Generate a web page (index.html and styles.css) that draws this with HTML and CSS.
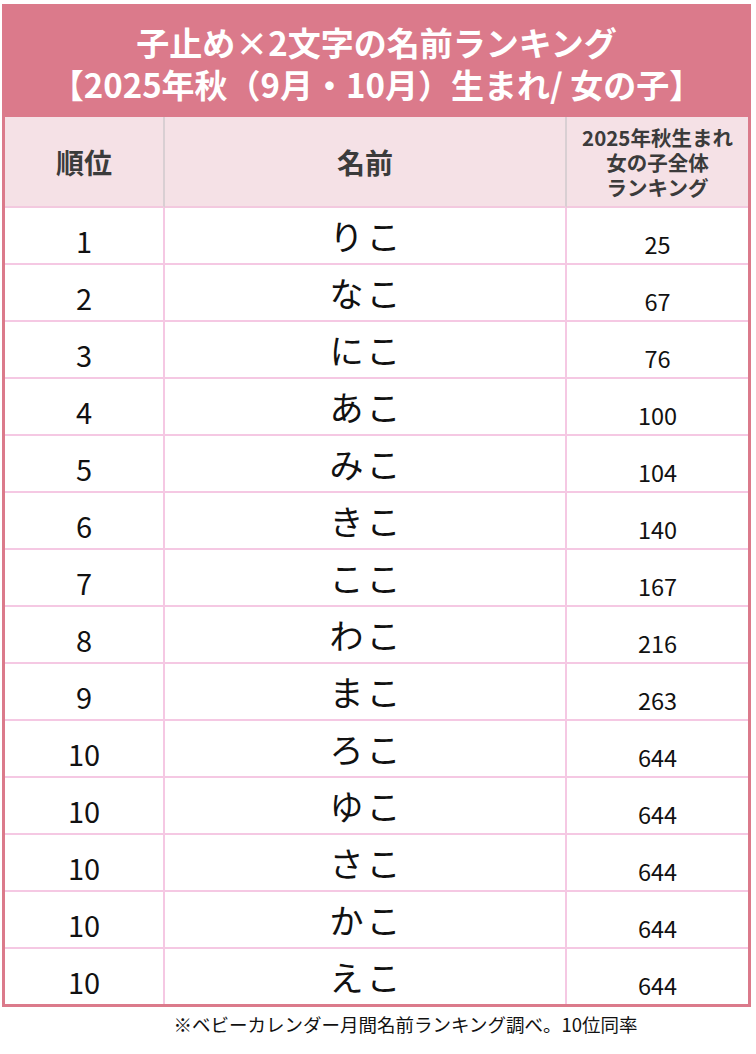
FILE: index.html
```html
<!DOCTYPE html>
<html lang="ja">
<head>
<meta charset="utf-8">
<link rel="stylesheet" href="styles.css">
</head>
<body>
<div class="sheet">
  <div class="title">
    <div class="tline">子止め×2文字の名前ランキング</div>
    <div class="tline">【2025年秋（9月・10月）生まれ/ 女の子】</div>
  </div>
  <div class="grid">
    <div class="hd c1">順位</div>
    <div class="hd c2">名前</div>
    <div class="hd c3 small">2025年秋生まれ<br>女の子全体<br>ランキング</div>

    <div class="rank c1">1</div><div class="name c2">りこ</div><div class="num c3">25</div>
    <div class="rank c1">2</div><div class="name c2">なこ</div><div class="num c3">67</div>
    <div class="rank c1">3</div><div class="name c2">にこ</div><div class="num c3">76</div>
    <div class="rank c1">4</div><div class="name c2">あこ</div><div class="num c3">100</div>
    <div class="rank c1">5</div><div class="name c2">みこ</div><div class="num c3">104</div>
    <div class="rank c1">6</div><div class="name c2">きこ</div><div class="num c3">140</div>
    <div class="rank c1">7</div><div class="name c2">ここ</div><div class="num c3">167</div>
    <div class="rank c1">8</div><div class="name c2">わこ</div><div class="num c3">216</div>
    <div class="rank c1">9</div><div class="name c2">まこ</div><div class="num c3">263</div>
    <div class="rank c1">10</div><div class="name c2">ろこ</div><div class="num c3">644</div>
    <div class="rank c1">10</div><div class="name c2">ゆこ</div><div class="num c3">644</div>
    <div class="rank c1">10</div><div class="name c2">さこ</div><div class="num c3">644</div>
    <div class="rank c1">10</div><div class="name c2">かこ</div><div class="num c3">644</div>
    <div class="rank c1 last">10</div><div class="name c2 last">えこ</div><div class="num c3 last">644</div>
  </div>
  <div class="note">※ベビーカレンダー月間名前ランキング調べ。10位同率</div>
</div>
</body>
</html>
```
FILE: styles.css
```css
html, body {
  margin: 0;
  padding: 0;
  background: #ffffff;
}
body {
  font-family: "Noto Sans CJK JP", "Noto Sans", sans-serif;
  color: #111111;
}
* {
  box-sizing: border-box;
}
.sheet {
  padding-top: 4px;
  padding-left: 2px;
  width: 751px;
}
.title {
  background: #db7a8b;
  color: #ffffff;
  font-weight: 700;
  font-size: 33px;
  text-align: center;
  padding: 17px 0 12px;
  height: 113px;
}
.tline {
  height: 42px;
  line-height: 42px;
  white-space: nowrap;
}
.grid {
  display: grid;
  grid-template-columns: 160px 402px 181px;
  border-left: 3px solid #db7a8b;
  border-right: 3px solid #db7a8b;
  border-bottom: 3px solid #db7a8b;
}
.grid > div {
  display: flex;
  justify-content: center;
  align-items: center;
  text-align: center;
  height: 57px;
  border-bottom: 2px solid #f5c8e3;
}
.grid > .c1, .grid > .c2 {
  border-right: 2px solid #f5c8e3;
}
.grid > .last {
  height: 55px;
  border-bottom: none;
}
.grid > .hd {
  height: 91px;
  background: #f5e1e6;
  color: #3b3b3b;
  font-weight: 700;
  font-size: 28px;
  border-bottom: 2px solid #f3c9df;
}
.grid > .hd.c1, .grid > .hd.c2 {
  border-right: 2px solid #d9cfd3;
}
.grid > .hd.small {
  font-size: 20.5px;
  line-height: 25px;
  padding-top: 2px;
}
.rank {
  font-size: 29px;
  padding-top: 9px;
}
.name {
  font-size: 34px;
  letter-spacing: 3px;
  padding-left: 3px;
}
.num {
  font-size: 23.5px;
  padding-top: 16px;
}
.note {
  font-size: 18.5px;
  text-align: center;
  padding: 3px 0 0 58px;
  line-height: 28px;
  color: #111111;
}
```
